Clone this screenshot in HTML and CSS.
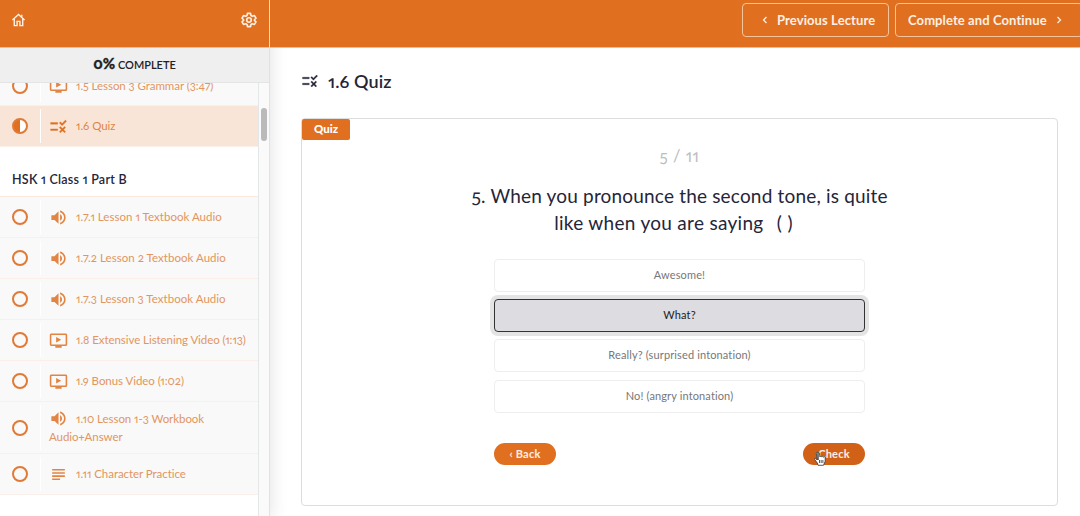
FILE: index.html
```html
<!DOCTYPE html>
<html lang="en">
<head>
    <meta charset="utf-8">
    <title>1.6 Quiz</title>
    <link rel="stylesheet" href="styles.css">
</head>
<body>
    <!-- Shared icons -->
    <svg class="icon-defs">
        <symbol id="icon-video" viewBox="0 0 24 24"><path d="M21 3H3c-1.1 0-2 .9-2 2v12c0 1.1.9 2 2 2h5v2h8v-2h5c1.1 0 2-.9 2-2V5c0-1.1-.9-2-2-2zm0 14H3V5h18v12zM9 7.500v7l6.500-3.500z"/></symbol>
        <symbol id="icon-audio" viewBox="0 0 24 24"><path d="M3 9v6h4l5 5V4L7 9H3zm13.500 3c0-1.770-1.020-3.290-2.500-4.030v8.050c1.480-.730 2.500-2.250 2.500-4.020zM14 3.230v2.060c2.890.860 5 3.540 5 6.710s-2.110 5.850-5 6.710v2.060c4.010-.910 7-4.490 7-8.770s-2.990-7.860-7-8.770z"/></symbol>
        <symbol id="icon-quiz" viewBox="0 0 24 24"><path d="M16.540 11L13 7.460l1.410-1.410 2.120 2.120 4.240-4.240 1.410 1.410L16.540 11zM11 7H2v2h9V7zm10 6.410L19.590 12 17 14.590 14.410 12 13 13.410 15.590 16 13 18.590 14.410 20 17 17.410 19.590 20 21 18.590 18.410 16 21 13.410zM11 15H2v2h9v-2z"/></symbol>
        <symbol id="icon-text" viewBox="0 0 24 24"><path d="M14 17H4v2h10v-2zm6-8H4v2h16V9zM4 15h16v-2H4v2zM4 5v2h16V5H4z"/></symbol>
    </svg>

    <aside class="sidebar">
        <div class="sidebar-header">
            <svg class="home-icon" viewBox="0 0 16 16"><path d="M1.500 8 8 2l6.500 6M3.500 6.600V14h3V9.500h3V14h3V6.600M11.500 4.500V2.500"/></svg>
            <svg class="gear-icon" viewBox="0 0 24 24"><path d="M9.700 2h4.600l.7 3.200 2 1.200 3.200-1 2.300 4L20.100 11.600v1l2.400 2.100-2.300 4-3.200-1-2 1.100-.7 3.200H9.700L9 18.800l-2-1.100-3.200 1-2.300-4 2.400-2.100v-1L1.500 9.400l2.300-4 3.200 1 2-1.200z"/><circle cx="12" cy="12" r="3.400"/></svg>
        </div>
        <div class="progress"><span class="percent">0%</span> COMPLETE</div>
        <div class="lectures">
            <div class="lecture-list">
                <div class="lecture first">
                    <div class="status"><span class="circle"></span></div>
                    <div class="lecture-name"><svg class="icon"><use href="#icon-video"/></svg>1.5 Lesson 3 Grammar (3:47)</div>
                </div>
                <div class="lecture active">
                    <div class="status"><span class="circle half"></span></div>
                    <div class="lecture-name"><svg class="icon"><use href="#icon-quiz"/></svg>1.6 Quiz</div>
                </div>
                <div class="section-title">HSK 1 Class 1 Part B</div>
                <div class="lecture audio">
                    <div class="status"><span class="circle"></span></div>
                    <div class="lecture-name"><svg class="icon"><use href="#icon-audio"/></svg>1.7.1 Lesson 1 Textbook Audio</div>
                </div>
                <div class="lecture audio">
                    <div class="status"><span class="circle"></span></div>
                    <div class="lecture-name"><svg class="icon"><use href="#icon-audio"/></svg>1.7.2 Lesson 2 Textbook Audio</div>
                </div>
                <div class="lecture audio">
                    <div class="status"><span class="circle"></span></div>
                    <div class="lecture-name"><svg class="icon"><use href="#icon-audio"/></svg>1.7.3 Lesson 3 Textbook Audio</div>
                </div>
                <div class="lecture">
                    <div class="status"><span class="circle"></span></div>
                    <div class="lecture-name"><svg class="icon"><use href="#icon-video"/></svg>1.8 Extensive Listening Video (1:13)</div>
                </div>
                <div class="lecture">
                    <div class="status"><span class="circle"></span></div>
                    <div class="lecture-name"><svg class="icon"><use href="#icon-video"/></svg>1.9 Bonus Video (1:02)</div>
                </div>
                <div class="lecture tall">
                    <div class="status"><span class="circle"></span></div>
                    <div class="lecture-name"><svg class="icon"><use href="#icon-audio"/></svg>1.10 Lesson 1-3 Workbook<br>Audio+Answer</div>
                </div>
                <div class="lecture">
                    <div class="status"><span class="circle"></span></div>
                    <div class="lecture-name"><svg class="icon"><use href="#icon-text"/></svg>1.11 Character Practice</div>
                </div>
            </div>
            <div class="scrollbar"><div class="thumb"></div></div>
        </div>
    </aside>

    <div class="page">
        <header class="topbar">
            <a class="nav-button previous"><svg class="chevron" viewBox="0 0 6 8"><path d="M4.500 1 1.500 4l3 3"/></svg><span>Previous Lecture</span></a>
            <a class="nav-button next"><span>Complete and Continue</span><svg class="chevron" viewBox="0 0 6 8"><path d="M1.500 1l3 3-3 3"/></svg></a>
        </header>
        <main class="content">
            <h1 class="title"><svg class="title-icon"><use href="#icon-quiz"/></svg><span>1.6 Quiz</span></h1>
            <div class="quiz">
                <span class="badge">Quiz</span>
                <div class="counter">5 / 11</div>
                <div class="question">
                    <div class="line-one">5. When you pronounce the second tone, is quite</div>
                    <div class="line-two">like when you are saying&nbsp; <span class="blank">( )</span></div>
                </div>
                <div class="answers">
                    <div class="answer">Awesome!</div>
                    <div class="answer selected">What?</div>
                    <div class="answer">Really? (surprised intonation)</div>
                    <div class="answer">No! (angry intonation)</div>
                </div>
                <div class="actions">
                    <button class="pill">‹ Back</button>
                    <button class="pill check">Check
                        <svg class="cursor" viewBox="0 0 12 15"><path d="M4 9V2.200C4 .7 2.300.7 2.300 2.200L3.200 9 1.900 7.600C.9 6.800-.1 7.700.8 8.700L3.300 12l.7 2.300h5.500l1.700-4V6.500c0-1-1.500-1.200-1.600-.2 0-1.200-1.700-1.300-1.800-.2 0-1.200-1.800-1.300-1.800-.1L5.300 2C5 .8 3.700 1 4 2.200z"/><path d="M5.500 9v3M7.200 9v3M8.900 9v3"/></svg>
                    </button>
                </div>
            </div>
        </main>
    </div>
</body>
</html>
```
FILE: styles.css
```css
* {
    box-sizing: border-box;
}
body {
    display: flex;
    height: 516px;
    margin: 0;
    overflow: hidden;
    background: #fff;
    color: #25253a;
    font-family: Lato, sans-serif;
    font-variant-numeric: oldstyle-nums proportional-nums;
}
.icon-defs {
    display: none;
}

/* Sidebar */
.sidebar {
    display: flex;
    flex-direction: column;
    width: 270px;
    flex: none;
    background: #fff;
    border-right: 1px solid #dfe3e3;
    box-shadow: 0 4px 18px rgba(0, 0, 0, 0.12);
    z-index: 1;
}
.sidebar-header {
    display: flex;
    align-items: center;
    justify-content: space-between;
    height: 48px;
    flex: none;
    padding: 0 12px 7px 11px;
    background: #e06f20;
    border-bottom: 1px solid #e9bd9b;
}
.home-icon {
    width: 15px;
    height: 16px;
}
.gear-icon {
    width: 16px;
    height: 16px;
}
.home-icon, .gear-icon {
    fill: none;
    stroke: #fdf0e4;
    stroke-width: 1.5;
}
.gear-icon {
    stroke-width: 2.4;
    stroke-linejoin: round;
}
.progress {
    height: 35px;
    flex: none;
    background: #efefef;
    border-bottom: 1px solid #e4e4e4;
    color: #222;
    font-size: 11px;
    font-weight: 600;
    line-height: 30px;
    text-align: center;
}
.percent {
    font-size: 15px;
    font-weight: 900;
    -webkit-text-stroke: 0.3px #222;
}
.lectures {
    display: flex;
    flex: 1;
    min-height: 0;
    overflow: hidden;
}
.lecture-list {
    width: 258px;
}
.lecture {
    display: flex;
    align-items: center;
    height: 41px;
    background: #f9f9f9;
    border-bottom: 1px solid #fbf0e9;
}
.lecture.first {
    height: 40px;
    margin-top: -17px;
}
.lecture.active {
    background: #f9e5d8;
}
.lecture.tall {
    height: 52px;
}
.status {
    display: flex;
    align-items: center;
    width: 41px;
    height: calc(100% - 6px);
    padding-left: 12px;
    border-right: 1px solid #fff;
}
.circle {
    width: 16px;
    height: 16px;
    border: 2px solid #e07a35;
    border-radius: 50%;
}
.half {
    background: linear-gradient(90deg, #e06f20 50%, #fff 50%);
}
.lecture-name {
    padding: 1px 0 0 8px;
    color: #e29560;
    font-size: 11.500px;
    letter-spacing: -0.060px;
    line-height: 18px;
    white-space: nowrap;
}
.audio .lecture-name {
    letter-spacing: 0.030px;
}
.icon {
    width: 19px;
    height: 19px;
    margin: -3px 8px 0 0;
    fill: #e28443;
    vertical-align: middle;
}
.active .icon {
    fill: #e06f20;
    stroke: #e06f20;
    stroke-width: 0.4;
}
.active .lecture-name {
    color: #e08545;
}
.section-title {
    height: 50px;
    padding: 7px 0 0 12px;
    border-bottom: 1px solid #fbe9de;
    font-size: 12.500px;
    font-weight: 600;
    letter-spacing: 0.250px;
    line-height: 51px;
}
.scrollbar {
    flex: 1;
    padding: 25px 2px 0;
    background: #fafafa;
    border-left: 1px solid #e4e7e7;
}
.thumb {
    width: 6px;
    height: 33px;
    background: #bababa;
    border-radius: 3px;
}

/* Page */
.page {
    flex: 1;
    min-width: 0;
}
.topbar {
    display: flex;
    position: relative;
    z-index: 2;
    gap: 6px;
    height: 48px;
    padding: 3px 0 0 472px;
    background: #e06f20;
    border-bottom: 1px solid #e9bd9b;
}
.nav-button {
    display: flex;
    align-items: center;
    flex: none;
    height: 34px;
    border: 1px solid #f4c49b;
    border-radius: 4px;
    color: #fdf0e4;
    font-size: 13px;
    font-weight: 700;
    letter-spacing: 0.1px;
}
.previous {
    width: 147px;
    gap: 9px;
    padding-left: 19px;
}
.next {
    width: 188px;
    gap: 9px;
    padding-left: 12px;
}
.chevron {
    width: 6px;
    height: 8px;
    fill: none;
    stroke: #fdf0e4;
    stroke-width: 1.3;
}
.content {
    padding: 21px 22px 0 31px;
}
.title {
    display: flex;
    align-items: center;
    gap: 9px;
    height: 24px;
    margin: 0 0 25px;
    font-size: 18px;
    font-weight: 600;
    letter-spacing: 0.1px;
}
.title-icon {
    width: 18px;
    height: 18px;
    fill: #25253a;
    stroke: #25253a;
    stroke-width: 0.4;
}
.quiz {
    width: 757px;
    height: 388px;
    border: 1px solid #ddd;
    border-radius: 4px;
}
.badge {
    display: block;
    width: 48px;
    height: 21px;
    background: #e06f20;
    border-radius: 2px;
    color: #fff;
    font-size: 11.500px;
    font-weight: 900;
    line-height: 20px;
    text-align: center;
}
.counter {
    margin-top: 6px;
    color: #bdbdbd;
    font-size: 16.500px;
    letter-spacing: 0.5px;
    line-height: 20px;
    text-align: center;
}
.question {
    margin-top: 16px;
    font-size: 19px;
    line-height: 27px;
    text-align: center;
}
.line-one {
    letter-spacing: 0.180px;
}
.line-two {
    padding-right: 12px;
    letter-spacing: 0.3px;
}
.blank {
    margin-left: 3px;
}
.answers {
    display: grid;
    gap: 7.200px;
    width: 371px;
    margin: 23px auto 0;
}
.answer {
    height: 33px;
    border: 1px solid #eee;
    border-radius: 4px;
    color: #777;
    font-size: 11px;
    letter-spacing: 0.130px;
    line-height: 30px;
    text-align: center;
}
.selected {
    background: #dcdce1;
    border-color: #333;
    box-shadow: 0 0 0 4px #e4e4e4;
    color: #222;
}
.actions {
    display: flex;
    justify-content: space-between;
    width: 371px;
    margin: 30px auto 0;
}
.pill {
    position: relative;
    width: 62px;
    height: 22px;
    padding: 0;
    background: #e06f20;
    border: none;
    border-radius: 11px;
    color: #fdf0e4;
    font-family: inherit;
    font-size: 11px;
    font-weight: 700;
    letter-spacing: 0.2px;
}
.check {
    background: #d26118;
}
.cursor {
    position: absolute;
    top: 8px;
    left: 11px;
    width: 12px;
    height: 15px;
    fill: #fff;
    stroke: #333;
    stroke-width: 0.8;
}
```
